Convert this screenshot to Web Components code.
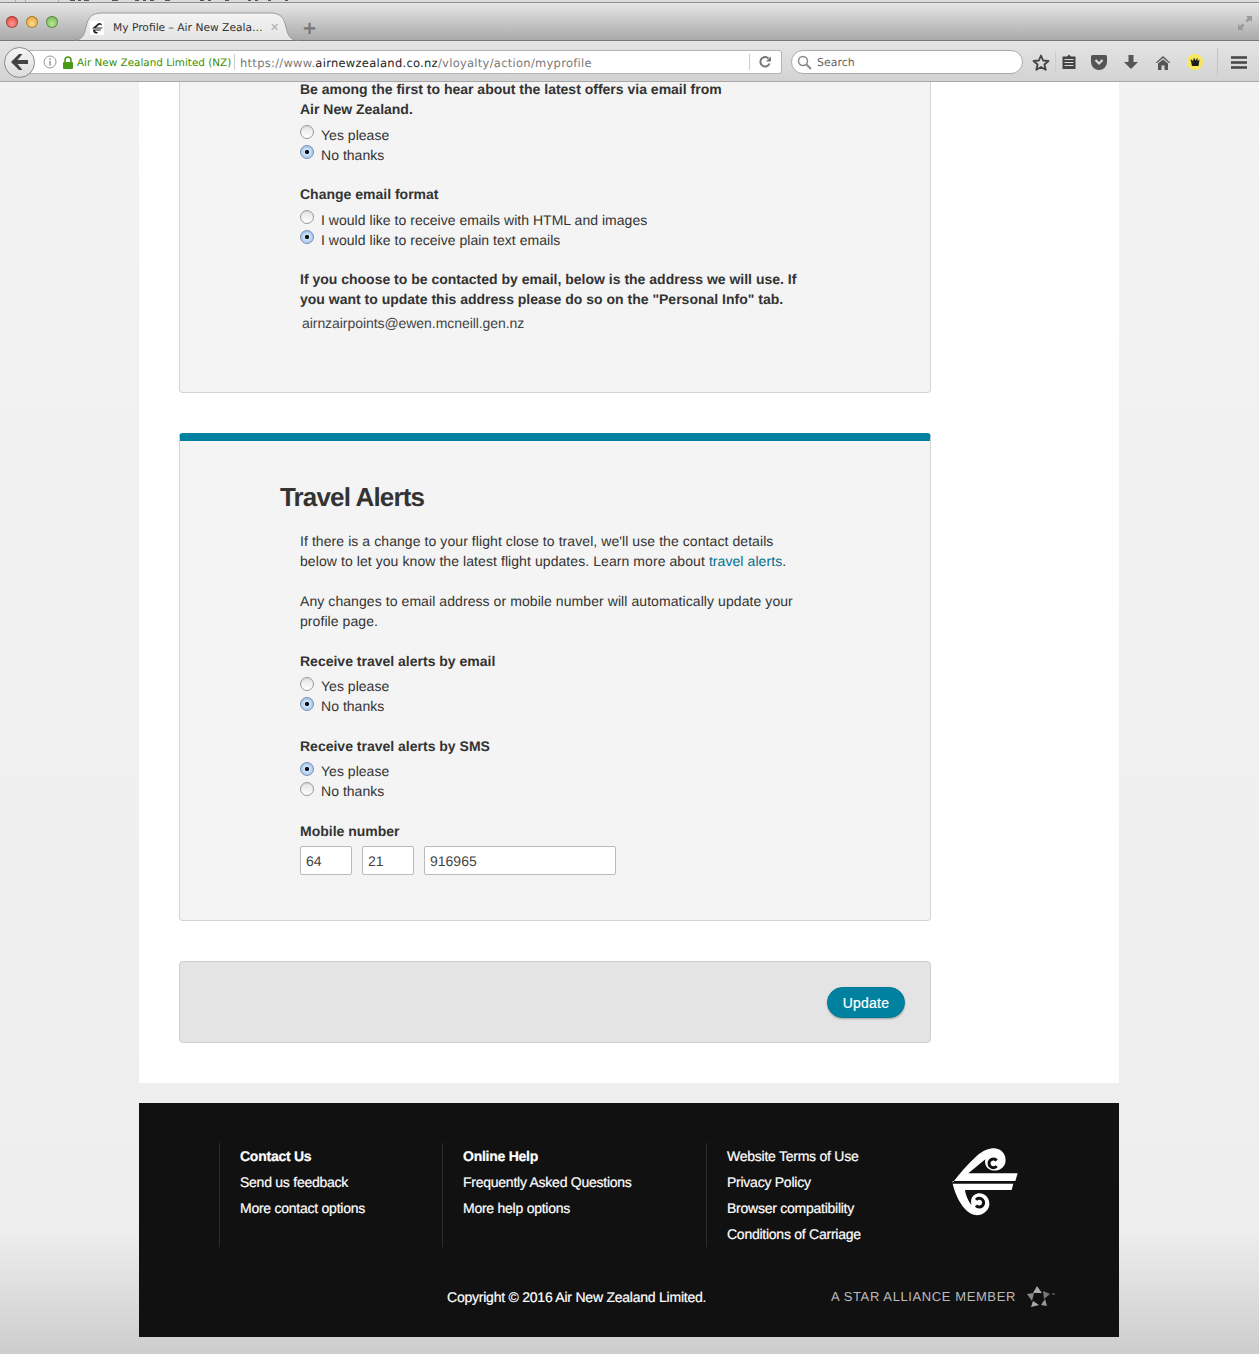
<!DOCTYPE html>
<html>
<head>
<meta charset="utf-8">
<title>My Profile</title>
<style>
html,body{margin:0;height:1354px;overflow:hidden}
body{display:flex;flex-direction:column;font:14px/20px "Liberation Sans",Arial,sans-serif;color:#333;text-rendering:geometricPrecision;
background:linear-gradient(#f3f3f3 0,#eeeeee 1230px,#cdcdcd 1354px)}
nz-page{flex:none}
</style>
</head>
<body>
<nz-browser></nz-browser>
<nz-page>
  <nz-panel clipped>
    <nz-group>
      <nz-text strong>Be among the first to hear about the latest offers via email from<br>Air New Zealand.</nz-text>
      <nz-radio>Yes please</nz-radio>
      <nz-radio checked>No thanks</nz-radio>
    </nz-group>
    <nz-group>
      <nz-text strong>Change email format</nz-text>
      <nz-radio>I would like to receive emails with HTML and images</nz-radio>
      <nz-radio checked>I would like to receive plain text emails</nz-radio>
    </nz-group>
    <nz-text strong>If you choose to be contacted by email, below is the address we will use. If<br>you want to update this address please do so on the "Personal Info" tab.</nz-text>
    <nz-text email>airnzairpoints@ewen.mcneill.gen.nz</nz-text>
  </nz-panel>

  <nz-panel accent heading="Travel Alerts">
    <nz-text block>If there is a change to your flight close to travel, we'll use the contact details<br>below to let you know the latest flight updates. Learn more about <a href="#" style="color:#00708d;text-decoration:none">travel alerts</a>.</nz-text>
    <nz-text block>Any changes to email address or mobile number will automatically update your<br>profile page.</nz-text>
    <nz-group>
      <nz-text strong>Receive travel alerts by email</nz-text>
      <nz-radio>Yes please</nz-radio>
      <nz-radio checked>No thanks</nz-radio>
    </nz-group>
    <nz-group>
      <nz-text strong>Receive travel alerts by SMS</nz-text>
      <nz-radio checked>Yes please</nz-radio>
      <nz-radio>No thanks</nz-radio>
    </nz-group>
    <nz-group>
      <nz-text strong>Mobile number</nz-text>
      <nz-phone></nz-phone>
    </nz-group>
  </nz-panel>

  <nz-action-bar>Update</nz-action-bar>
</nz-page>
<nz-footer></nz-footer>

<script>
class NzBrowser extends HTMLElement {
    connectedCallback() {
        const ticks = [[15, 1], [25, 1], [58, 1], [70, 5], [78, 3], [84, 5], [112, 6], [135, 4], [143, 3], [150, 4], [165, 5], [200, 4], [208, 3], [225, 4], [248, 3], [255, 3], [268, 3], [285, 3]];
        const desk = ticks.map(([x, w]) => `linear-gradient(${w > 1 ? '#555' : '#aaa'},${w > 1 ? '#555' : '#aaa'}) ${x}px 0/${w}px ${w > 1 ? 1 : 2}px no-repeat`).join(',');
        this.attachShadow({mode: 'open'}).innerHTML = `
        <style>
        :host{display:block;position:relative;z-index:2;font:11px/14px "DejaVu Sans",sans-serif;color:#333}
        .desk{height:3px;background:${desk},#dcdcdc;border-bottom:1px solid #8e8e8e;box-sizing:border-box}
        .tabs{height:38px;box-sizing:border-box;border-bottom:1px solid #777;background:linear-gradient(#e6e6e6,#a9a9a9);display:flex;align-items:flex-end;padding-left:6px}
        .dots{display:flex;gap:8px;align-self:flex-start;padding-top:13px;width:68px}
        .dots i{width:12px;height:12px;border-radius:50%;box-shadow:inset 0 0 0 1px rgba(0,0,0,.3)}
        .tab{position:relative;width:224px;height:29px;margin-bottom:-1px;display:flex;align-items:center;padding:3px 0 0 16px;box-sizing:border-box}
        .tab svg.shape{position:absolute;left:0;top:0}
        .tab>span,.tab>svg.fav,.tab>b{position:relative}
        .fav{width:14px;height:14px;background:#fff;margin-right:9px;flex:none}
        .tab span{width:157px;white-space:nowrap;font-size:10.7px;color:#333;flex:none}
        .tab b{color:#aaa;font-size:11px;font-weight:bold}
        .plus{color:#777;font-size:18px;margin:0 0 4px 4px;font-weight:bold}
        .grow{flex:1}
        .nav{height:41px;box-sizing:border-box;border-bottom:1px solid #a8a8a8;background:linear-gradient(#e4e4e4,#d3d3d3);display:flex;align-items:center;padding:2px 0 0 4px}
        .back{width:31px;height:31px;box-sizing:border-box;border-radius:50%;border:1px solid #8a8a8a;background:linear-gradient(#f6f6f6,#dcdcdc);display:flex;align-items:center;justify-content:center;position:relative;z-index:1;flex:none}
        .url{margin-left:-15px;width:762px;height:24px;box-sizing:border-box;border:1px solid #b4b4b4;border-radius:3px;background:#fff;display:flex;align-items:center;padding-left:22px;white-space:nowrap}
        .url span,.search span{padding-top:2px}
        .url .id{color:#3d8f00;margin-left:3px;width:157px;overflow:hidden;font-size:10.4px}
        .sep{width:1px;height:16px;background:#ccc;flex:none}
        .addr{margin-left:5px;width:509px;color:#777;overflow:hidden;font-size:11.5px;letter-spacing:.024em}
        .addr em{font-style:normal;color:#222}
        .search{margin-left:9px;width:232px;height:24px;box-sizing:border-box;border:1px solid #aaa;border-radius:12px;background:#fff;display:flex;align-items:center;padding-left:5px;gap:5px;color:#666;flex:none}
        .icons{display:flex;align-items:center;margin-left:8px}
        .icons svg{flex:none;display:block}
        .cell{width:20px;height:20px;display:flex;align-items:center;justify-content:center}
        </style>
        <div class="desk"></div>
        <div class="tabs">
          <div class="dots">
            <i style="background:radial-gradient(circle at 50% 65%,#ff9a90,#d8332b)"></i>
            <i style="background:radial-gradient(circle at 50% 65%,#ffd98a,#e09a1e)"></i>
            <i style="background:radial-gradient(circle at 50% 65%,#bde69a,#5fae3f)"></i>
          </div>
          <div class="tab">
            <svg class="shape" width="224" height="29" viewBox="0 0 224 29"><defs><linearGradient id="t" x1="0" y1="0" x2="0" y2="1"><stop offset="0" stop-color="#f4f4f4"/><stop offset="1" stop-color="#e4e4e4"/></linearGradient></defs><path d="M0 28C8 28 10 24 12 15 14 5 18 1 28 1H196C206 1 210 5 212 15 214 24 216 28 224 28" fill="url(#t)" stroke="#9a9a9a"/></svg>
            <svg class="fav" viewBox="0 0 14 14"><path d="M2 7.500 8 2.500C10 1.500 12 2.500 12 4.500 11 3.500 9.500 3.500 9 4L6 6.500H12.500L12 7.500H3ZM3 8.500H11L10.500 9.500H5C5.500 11 7 11.500 8 11 8 12 7 13 5.500 12.500 3.500 12 3 10 3 8.500Z" fill="#222"/></svg>
            <span>My Profile – Air New Zeala…</span>
            <b>✕</b>
          </div>
          <div class="plus">+</div>
          <div class="grow"></div>
          <svg width="16" height="16" viewBox="0 0 16 16" style="margin:0 6px 9px 0"><path d="M9 1H15V7L13 5 10.500 7.500 8.500 5.500 11 3ZM7 15H1V9L3 11 5.500 8.500 7.500 10.500 5 13Z" fill="#999"/></svg>
        </div>
        <div class="nav">
          <div class="back"><svg width="18" height="16" viewBox="0 0 18 16"><path d="M8 0 0 8 8 16H11.500L6.500 10H17V6H6.500L11.500 0Z" fill="#444"/></svg></div>
          <div class="url">
            <svg width="14" height="14" viewBox="0 0 14 14"><circle cx="7" cy="7" r="6" fill="none" stroke="#999"/><rect x="6.300" y="6" width="1.400" height="4.500" fill="#888"/><rect x="6.300" y="3.500" width="1.400" height="1.500" fill="#888"/></svg>
            <svg width="12" height="13" viewBox="0 0 12 13" style="margin-left:5px"><path d="M3 6V4a3 3 0 0 1 6 0V6" fill="none" stroke="#4a9a18" stroke-width="1.600"/><rect x="1" y="6" width="10" height="7" rx="1" fill="#4a9a18"/></svg>
            <span class="id">Air New Zealand Limited (NZ)</span>
            <i class="sep"></i>
            <span class="addr">https://www.<em>airnewzealand.co.nz</em>/vloyalty/action/myprofile</span>
            <i class="sep"></i>
            <svg width="14" height="14" viewBox="0 0 14 14" style="margin-left:8px"><path d="M11.500 8.500A4.700 4.700 0 1 1 10.500 3.500" fill="none" stroke="#777" stroke-width="2"/><path d="M8 6.500H13V1.500Z" fill="#777"/></svg>
          </div>
          <div class="search">
            <svg width="15" height="15" viewBox="0 0 15 15"><circle cx="6" cy="6" r="4.500" fill="none" stroke="#888" stroke-width="1.500"/><path d="M9.500 9.500 14 14" stroke="#888" stroke-width="2"/></svg>
            <span>Search</span>
          </div>
          <div class="icons">
            <div class="cell"><svg width="18" height="17" viewBox="0 0 18 17"><path d="M9 1.500 11.100 6.500 16.500 7 12.400 10.500 13.700 15.800 9 13 4.300 15.800 5.600 10.500 1.500 7 6.900 6.500Z" fill="none" stroke="#444" stroke-width="1.800" stroke-linejoin="round"/></svg></div>
            <i class="sep" style="height:20px;margin:0 3px 0 4px"></i>
            <div class="cell" style="margin-right:10px"><svg width="16" height="16" viewBox="0 0 16 16"><path d="M6 2.500 8 .5 10 2.500H14.500V15H1.500V2.500Z" fill="#444"/><path d="M3.500 5.500H12.500M3.500 8.500H12.500M3.500 11.500H12.500" stroke="#ddd" stroke-width="1"/></svg></div>
            <div class="cell" style="margin-right:12px"><svg width="16" height="15" viewBox="0 0 16 15"><path d="M1.500 0H14.500A1.500 1.500 0 0 1 16 1.500V7A8 8 0 0 1 0 7V1.500A1.500 1.500 0 0 1 1.500 0Z" fill="#555"/><path d="M4.500 5 8 8.500 11.500 5" fill="none" stroke="#ddd" stroke-width="2.200"/></svg></div>
            <div class="cell" style="margin-right:12px"><svg width="16" height="16" viewBox="0 0 16 16"><path d="M5.500 1H10.500V8H15L8 15 1 8H5.500Z" fill="#555"/></svg></div>
            <div class="cell" style="margin-right:12px"><svg width="16" height="15" viewBox="0 0 16 15"><path d="M8 1 0.500 8H2L8 3 14 8H15.500ZM8 4.500 3 8.500V15H6.500V10.500H9.500V15H13V8.500Z" fill="#555"/></svg></div>
            <div class="cell"><svg width="16" height="16" viewBox="0 0 16 16"><circle cx="8" cy="8" r="8" fill="#f7e85c"/><path d="M3.500 5 6 7 7 3.500 8.500 6.500 10.500 3.500 10.500 7 12.500 5.500 11.500 12H5Z" fill="#1d1d1d"/></svg></div>
            <i class="sep" style="height:28px;margin:0 12px 0 12px;background:#c4c4c4"></i>
            <div class="cell" style="width:17px"><svg width="16" height="13" viewBox="0 0 16 13"><path d="M0 1.500H16M0 6.500H16M0 11.500H16" stroke="#444" stroke-width="2.400"/></svg></div>
          </div>
        </div>`;
    }
}

class NzPage extends HTMLElement {
    constructor() {
        super();
        this.attachShadow({mode: 'open'}).innerHTML = `
        <style>:host{display:block;width:980px;margin-left:139px;background:#fff;box-sizing:border-box;padding:0 40px 40px;overflow:hidden}</style>
        <slot></slot>`;
    }
}

class NzPanel extends HTMLElement {
    connectedCallback() {
        const heading = this.getAttribute('heading');
        this.attachShadow({mode: 'open'}).innerHTML = `
        <style>
        :host{display:block;width:752px;box-sizing:border-box;background:#f4f4f4;border:1px solid #d4d4d4;border-radius:4px;margin-bottom:40px;padding:0 120px 45px;--label-gap:6px;--radio-top:0px;--group-gap:19px}
        :host([clipped]){border-top:0;border-radius:0 0 4px 4px;margin-top:-3px;padding-bottom:59px}
        :host([accent]){border-top:8px solid #00819f;padding-top:41px;--label-gap:5px;--radio-top:1px;--group-gap:20px}
        h2{font:bold 26px/30px "Liberation Sans",Arial,sans-serif;letter-spacing:-.85px;margin:0 0 19px -20px;color:#333}
        </style>
        ${heading ? `<h2>${heading}</h2>` : ''}
        <slot></slot>`;
    }
}

class NzGroup extends HTMLElement {
    constructor() {
        super();
        this.attachShadow({mode: 'open'}).innerHTML = `
        <style>:host{display:block;margin-bottom:var(--group-gap)}</style><slot></slot>`;
    }
}

class NzText extends HTMLElement {
    constructor() {
        super();
        this.attachShadow({mode: 'open'}).innerHTML = `
        <style>
        :host{display:block;white-space:nowrap}
        :host([strong]){font-weight:bold;margin-bottom:var(--label-gap)}
        :host([block]){margin-bottom:20px;letter-spacing:.075px}
        :host([email]){margin-left:2px;margin-top:-2px;letter-spacing:-.06px;color:#444}
        </style><slot></slot>`;
    }
}

class NzRadio extends HTMLElement {
    constructor() {
        super();
        this.attachShadow({mode: 'open'}).innerHTML = `
        <style>
        :host{display:flex;height:20px;gap:7px;letter-spacing:.03px}
        i{width:14px;height:14px;box-sizing:border-box;border-radius:50%;border:1px solid #9a9a9a;background:linear-gradient(#e4e4e4,#fff);margin-top:var(--radio-top);flex:none;box-shadow:inset 0 1px 1px rgba(0,0,0,.08)}
        :host([checked]) i{border-color:#7c8fb0;background:radial-gradient(circle,#111 0,#111 1.800px,#cfe3fa 2.400px,#8fbcf0 100%)}
        </style>
        <i></i><span><slot></slot></span>`;
    }
}

class NzPhone extends HTMLElement {
    connectedCallback() {
        const box = (w, t) => `<div style="width:${w}px">${t}</div>`;
        this.attachShadow({mode: 'open'}).innerHTML = `
        <style>
        :host{display:flex;gap:10px;margin-bottom:-20px}
        div{height:29px;box-sizing:border-box;border:1px solid #bbb;border-radius:2px;background:#fff;padding:0 5px;line-height:29px;color:#444}
        </style>
        ${box(52, '64')}${box(52, '21')}${box(192, '916965')}`;
    }
}

class NzActionBar extends HTMLElement {
    constructor() {
        super();
        this.attachShadow({mode: 'open'}).innerHTML = `
        <style>
        :host{display:flex;width:752px;height:82px;box-sizing:border-box;background:#e4e4e4;border:1px solid #cfcfcf;border-radius:4px;align-items:center;justify-content:flex-end;padding-right:25px}
        button{width:78px;height:31px;border-radius:16px;border:1px solid #007a96;background:#00819f;color:#fff;font:14px "Liberation Sans",Arial,sans-serif;letter-spacing:.2px;box-shadow:0 1px 2px rgba(0,0,0,.3);padding:2px 0 0;-webkit-text-stroke:.2px #fff}
        </style>
        <button><slot></slot></button>`;
    }
}

class NzFooter extends HTMLElement {
    connectedCallback() {
        const col = (w, items) => `<ul style="width:${w}px">${items.map(([t, b]) => `<li class="${b ? 'b' : ''}">${t}</li>`).join('')}</ul>`;
        this.attachShadow({mode: 'open'}).innerHTML = `
        <style>
        :host{display:block;width:980px;height:234px;margin:20px 0 17px 139px;background:#111;color:#fff;box-sizing:border-box;padding:40px 0 0 80px;font:14px/26px "Liberation Sans",Arial,sans-serif}
        .cols{display:flex;height:104px}
        ul{list-style:none;margin:0;padding:0 0 0 20px;border-left:1px solid #2c2c2c;box-sizing:border-box}
        li{-webkit-text-stroke:.2px #fff;letter-spacing:-.25px}
        .b{font-weight:bold}
        .logo{margin:-3px 0 0 -10px;flex:none}
        .base{display:flex;align-items:center;margin-top:37px;height:26px}
        .copy{margin-left:228px;width:384px;-webkit-text-stroke:.2px #fff;letter-spacing:-.23px;white-space:nowrap}
        .star{font-size:13px;letter-spacing:.6px;color:#bbb;white-space:nowrap}
        .base svg{margin-left:10px}
        </style>
        <div class="cols">
          ${col(223, [['Contact Us', 1], ['Send us feedback'], ['More contact options']])}
          ${col(264, [['Online Help', 1], ['Frequently Asked Questions'], ['More help options']])}
          ${col(244, [['Website Terms of Use'], ['Privacy Policy'], ['Browser compatibility'], ['Conditions of Carriage']])}
          <svg class="logo" width="90" height="85" viewBox="0 0 270 255">
            <path d="M38 128C60 100 85 70 110 48 130 30 150 24 165 25 190 28 200 50 196 68 190 92 160 96 148 88 138 82 133 70 136 58L85 100H233L226 123H38Z" fill="#fff"/>
            <path d="M170 61.600A13 13 0 1 0 170 78.400" fill="none" stroke="#111" stroke-width="9"/>
            <path d="M38 131H220L215 150H75C77 165 85 185 95 195 90 180 95 165 115 160 135 158 150 175 148 195 145 215 125 228 105 225 75 220 48 175 38 131Z" fill="#fff"/>
            <path d="M108 179.600A13 13 0 1 1 108 196.400" fill="none" stroke="#111" stroke-width="9"/>
          </svg>
        </div>
        <div class="base">
          <span class="copy">Copyright © 2016 Air New Zealand Limited.</span>
          <span class="star">A STAR ALLIANCE MEMBER</span>
          <svg width="29" height="24" viewBox="0 0 29 24"><path d="M11 1 16 8H7Z" fill="#aaa"/><path d="M17 6 24 9 18 14Z" fill="#777"/><path d="M1 9 8 8 6 16Z" fill="#8a8a8a"/><path d="M7 16 13 20 5 22Z" fill="#aaa"/><path d="M15 20 19 14 21 21Z" fill="#999"/><path d="M26 9H29" stroke="#777"/></svg>
        </div>`;
    }
}

customElements.define('nz-browser', NzBrowser);
customElements.define('nz-page', NzPage);
customElements.define('nz-panel', NzPanel);
customElements.define('nz-group', NzGroup);
customElements.define('nz-text', NzText);
customElements.define('nz-radio', NzRadio);
customElements.define('nz-phone', NzPhone);
customElements.define('nz-action-bar', NzActionBar);
customElements.define('nz-footer', NzFooter);
</script>
</body>
</html>
